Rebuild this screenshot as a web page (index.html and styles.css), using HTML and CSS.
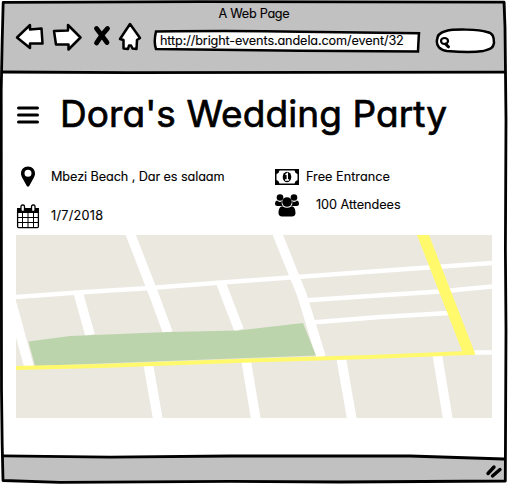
FILE: index.html
```html
<!DOCTYPE html>
<html lang="en">
<head>
<meta charset="utf-8">
<title>A Web Page</title>
<link rel="stylesheet" href="styles.css">
</head>
<body>
<div class="window">
  <header class="chrome">
    <div class="caption"><span>A Web Page</span></div>
    <nav class="toolbar">
      <svg class="nav-icons" width="130" height="34" viewBox="14 20 130 34">
        <g fill="#fff" stroke="#000" stroke-width="2.5" stroke-linejoin="round">
          <path d="M17 37.5L30 25V29.5L41.5 28.5L42.5 43.5L30 43.5V48Z"/>
          <path d="M54 31L68 30.5V25L80.500 37.500L68.500 49.500V44.500H56Z"/>
          <path d="M130 24L140 38L137 40L136.500 49L132.500 48.500L131 45.500H129L128 49L123.500 48.500V40L120 39Z"/>
        </g>
        <path d="M96.500 28.500Q100 33 107 42.500M107.500 28.500Q102 34 96.500 43" fill="none" stroke="#000" stroke-width="4.800" stroke-linecap="round"/>
      </svg>
      <div class="address">
        <svg class="outline" width="268" height="24" viewBox="153 29 268 24"><path d="M156 31.500Q240 30.500 300 31.800L419 33.200Q418.500 40 418 51.500L300 50.800L156 49Q153.500 42 156 31.500Z" fill="#fff" stroke="#000" stroke-width="2.500"/></svg>
        <span class="url">http://bright-events.andela.com/event/32</span>
      </div>
      <svg class="search" width="62" height="27" viewBox="434 27 62 27">
        <path d="M446 31C453 29 479 29 487 32C493 33 494 37 494 43C493 49 490 49 483 51C474 52.500 459 52 447 51C440 50 436 46 437 40C437 35 440 32.500 446 31Z" fill="#fff" stroke="#000" stroke-width="2.500"/>
        <ellipse cx="444.500" cy="41" rx="3.500" ry="3" fill="none" stroke="#000" stroke-width="2.200"/><path d="M445.500 44L448.500 46.800" stroke="#000" stroke-width="3" stroke-linecap="round"/>
      </svg>
    </nav>
  </header>
  <main class="page">
    <div class="heading">
      <svg width="22" height="18" viewBox="0 0 22 18"><path d="M1.500 2H20.500M1.500 9H20.500M1.500 16H20.500" stroke="#000" stroke-width="3" stroke-linecap="round"/></svg>
      <h1>Dora's Wedding Party</h1>
    </div>
    <div class="details">
      <div class="column">
        <div class="item place">
          <svg width="24" height="22" viewBox="0 0 24 22"><path fill-rule="evenodd" d="M12 .5C7.800 .5 5 3.500 5 7.300C5 9.300 5.600 10.600 6.500 12.300L10.800 20Q12 21.500 13.200 20L17.500 12.300C18.400 10.600 19 9.300 19 7.300C19 3.500 16.200 .5 12 .5ZM12 3.700A3.500 3.500 0 1 1 12 10.700A3.500 3.500 0 1 1 12 3.700Z"/></svg>
          <span>Mbezi Beach , Dar es salaam</span>
        </div>
        <div class="item date">
          <svg width="24" height="25" viewBox="0 0 24 25"><rect x="1.600" y="4.600" width="20.800" height="19" rx="1" fill="#fff" stroke="#000" stroke-width="1.300"/><path d="M1 4H23V9H1Z"/><path d="M6.500 9V24M12 9V24M17.500 9V24M1 13.500H23M1 18.500H23" fill="none" stroke="#000"/><rect x="5" y="1" width="3.500" height="6.500" rx="1.500" fill="#fff" stroke="#000" stroke-width="1.300"/><rect x="15.500" y="1" width="3.500" height="6.500" rx="1.500" fill="#fff" stroke="#000" stroke-width="1.300"/></svg>
          <span>1/7/2018</span>
        </div>
      </div>
      <div class="column">
        <div class="item price">
          <svg width="24" height="16" viewBox="0 0 24 16"><path fill-rule="evenodd" d="M0 0H24V16H0ZM4.500 1.500Q4 4.500 1.500 5V11Q4 11.500 4.500 14.500H19.500Q20 11.500 22.500 11V5Q20 4.500 19.500 1.500Z"/><ellipse cx="12" cy="8" rx="4.300" ry="5.200"/><path d="M10.500 5.800L12.300 4.500V10.500M10 11H14.200" fill="none" stroke="#fff" stroke-width="1.400"/></svg>
          <span>Free Entrance</span>
        </div>
        <div class="item people">
          <svg width="24" height="23" viewBox="0 0 24 23"><circle cx="5" cy="3.500" r="3.300"/><circle cx="19" cy="3.500" r="3.300"/><path d="M2 6.500Q4.500 9 7 7Q6 11 8 12H2.500Q0 12 0 9.500Q0 7 2 6.500ZM22 6.500Q19.500 9 17 7Q18 11 16 12H21.500Q24 12 24 9.500Q24 7 22 6.500Z"/><circle cx="12" cy="8" r="4.800"/><path d="M7.500 12.200Q12 15.500 16.500 12.200C19.800 12.500 20.500 16 20.500 19.500Q20 22.500 17 22.500H7Q4 22.500 3.500 19.500C3.500 16 4.200 12.500 7.500 12.200Z"/></svg>
          <span>100 Attendees</span>
        </div>
      </div>
    </div>
    <svg class="map" width="476" height="183" viewBox="16 235 476 183">
      <path fill="#ebe8e0" d="M16 235H492V418H16Z"/>
      <g fill="none" stroke="#fff">
        <path stroke-width="4.300" d="M16 297L78 292.500L150 288L215 283L290 277.500L400 269.500L492 263M304 300.500L370 296L440 291.500L492 286.500M312 322.500L380 317L449 313M474 352.500H492"/>
        <path stroke-width="9.600" d="M130 233L154 295L168 333M78 292L90 335M221 283L239 330M277 233L302 295L321 357M12 304L29 367M148 363L158 420M246 360L256 420M341 357L352 420M437 353L448 420"/>
      </g>
      <path fill="#bbd4ab" d="M28.500 341.500L70 336L168 332L238 330.500L303 323L316 355.500L180 360.500L35 366Z"/>
      <path fill="none" stroke="#fff96b" stroke-width="4" d="M16 368L100 366L250 360.500L370 357L474 352.800"/>
      <path fill="#fff96b" d="M417 235H429L475.500 354.500H463.500Z"/>
    </svg>
  </main>
  <footer class="statusbar"></footer>
  <svg class="frame" width="508" height="484" viewBox="0 0 508 484">
    <path d="M2 455.500H200L410 455.300L508 459V452H2Z" fill="#fff"/>
    <g fill="none" stroke="#000" stroke-width="2.800" stroke-linejoin="round" stroke-linecap="round">
      <path d="M3.200 2.300L200 1.700L504 2.200L505 27L506 120L505.400 250L506 330L505.300 481L340 482L230 481.300L60 482.300L3 480.500L2.200 445L1.500 390L1.200 90L2.200 40Z"/>
      <path d="M2 72L130 72.700L505 72.200M3 455.800L110 457.200L230 456L410 456L504 459"/>
    </g>
    <path d="M488 473.500L494 467M492.500 476L500 469.500" stroke="#000" stroke-width="3.400" stroke-linecap="round"/>
  </svg>
</div>
</body>
</html>
```
FILE: styles.css
```css
* { box-sizing: border-box; }
body {
  margin: 0;
  background: #fff;
  color: #000;
  font: 12.7px/18px Inter, "Liberation Sans", sans-serif;
  font-feature-settings: "cv11" 1;
  white-space: nowrap;
  -webkit-text-stroke: .12px #000;
}
svg { display: block; flex: none; }
.window {
  position: relative;
  display: flex;
  flex-direction: column;
  width: 508px;
  height: 484px;
  padding: 2px;
  overflow: hidden;
}
.chrome { height: 71px; background: #c1c1c1; }
.caption { display: flex; justify-content: center; padding-top: 3px; height: 18px; line-height: 18px; }
.caption span { letter-spacing: -.3px; }
.toolbar { display: flex; align-items: flex-start; padding-left: 12px; }
.address { display: grid; margin: 9px 13px 0 9px; }
.address > * { grid-area: 1 / 1; }
.url { padding: 3px 0 0 7px; letter-spacing: -.13px; }
.search { margin-top: 7px; }
.page { flex: 1; padding: 19px 14px 0; }
.heading { display: flex; align-items: center; gap: 21px; height: 42px; padding: 4px 0 0 1px; }
h1 { margin: -3px 0 0; font-size: 37px; line-height: 42px; font-weight: 400; letter-spacing: .08px; -webkit-text-stroke: .7px #000; }
.details { display: grid; grid-template-columns: 259px 1fr; height: 101px; padding-top: 31px; }
.item { display: flex; align-items: center; }
.place { height: 24px; gap: 11px; letter-spacing: -.1px; }
.date { height: 26px; gap: 11px; margin-top: 14px; letter-spacing: .25px; }
.price { height: 24px; gap: 7px; }
.people { height: 25px; gap: 17px; margin-top: 4px; }
.people span { margin-top: -2px; letter-spacing: -.05px; }
.statusbar { height: 26px; background: #c1c1c1; }
.frame { position: absolute; inset: 0; pointer-events: none; }
```
